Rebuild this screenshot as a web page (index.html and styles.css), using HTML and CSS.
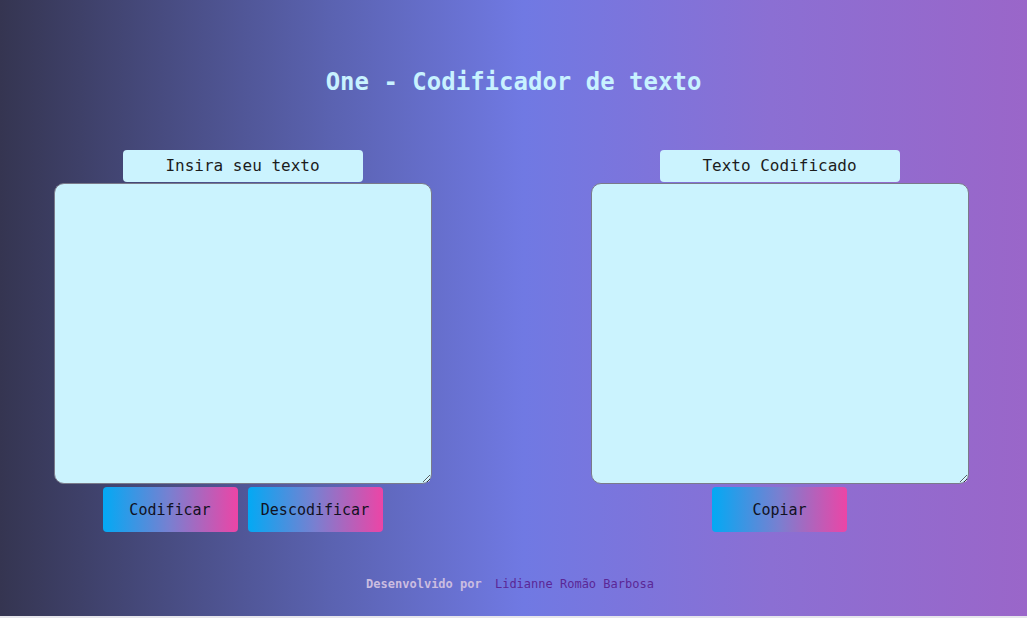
FILE: index.html
```html
<!DOCTYPE html>
<html lang="pt-BR">
<head>
<meta charset="utf-8">
<title>One - Codificador de texto</title>
<link rel="stylesheet" href="styles.css">
</head>
<body>
<div class="page">
  <h1 class="title">One - Codificador de texto</h1>
  <main class="columns">
    <section class="column">
      <div class="label">Insira seu texto</div>
      <textarea class="box"></textarea>
      <div class="actions">
        <button class="btn">Codificar</button>
        <button class="btn">Descodificar</button>
      </div>
    </section>
    <section class="column">
      <div class="label">Texto Codificado</div>
      <textarea class="box" readonly></textarea>
      <div class="actions">
        <button class="btn">Copiar</button>
      </div>
    </section>
  </main>
  <footer class="footer">Desenvolvido por <span class="author">Lidianne Romão Barbosa</span></footer>
</div>
</body>
</html>
```
FILE: styles.css
```css
html {
  background: #e6e6ec;
}
body {
  margin: 0;
  font-family: "DejaVu Sans Mono", "Liberation Mono", monospace;
}
.page {
  height: 616px;
  background: linear-gradient(to right, #353551 0%, #5a62b0 32%, #7079e3 51%, #8b6fd3 75%, #9a66c9 100%);
  display: flex;
  flex-direction: column;
  align-items: center;
}
.title {
  margin: 68px 0 0;
  font-size: 24px;
  line-height: 28px;
  font-weight: bold;
  color: #c8f2ff;
}
.columns {
  margin-top: 54px;
  margin-right: 5px;
  display: flex;
  gap: 159px;
}
.column {
  display: flex;
  flex-direction: column;
  align-items: center;
  width: 378px;
}
.label {
  width: 240px;
  height: 32px;
  box-sizing: border-box;
  background: #cbf3fe;
  border-radius: 4px;
  color: #1c1c1c;
  font-size: 16px;
  line-height: 32px;
  text-align: center;
}
.box {
  margin-top: 1px;
  width: 378px;
  height: 301px;
  box-sizing: border-box;
  background: #cbf3fe;
  border: 1px solid #7a7a8a;
  border-radius: 10px;
  padding: 8px;
  font-family: inherit;
  font-size: 15px;
  outline: none;
}
.actions {
  margin-top: 3px;
  display: flex;
  gap: 10px;
}
.btn {
  width: 135px;
  height: 45px;
  border: none;
  border-radius: 4px;
  background: linear-gradient(to right, #03a9f4 0%, #7a7fd0 50%, #ec45a6 100%);
  color: #111122;
  font-family: inherit;
  font-size: 15px;
  cursor: pointer;
}
.footer {
  margin-top: 44px;
  margin-right: 7px;
  font-size: 12px;
  line-height: 16px;
  font-weight: bold;
  color: #cbbde0;
  white-space: pre;
}
.author {
  margin-left: 6px;
  font-weight: normal;
  color: #5b2796;
}
```
